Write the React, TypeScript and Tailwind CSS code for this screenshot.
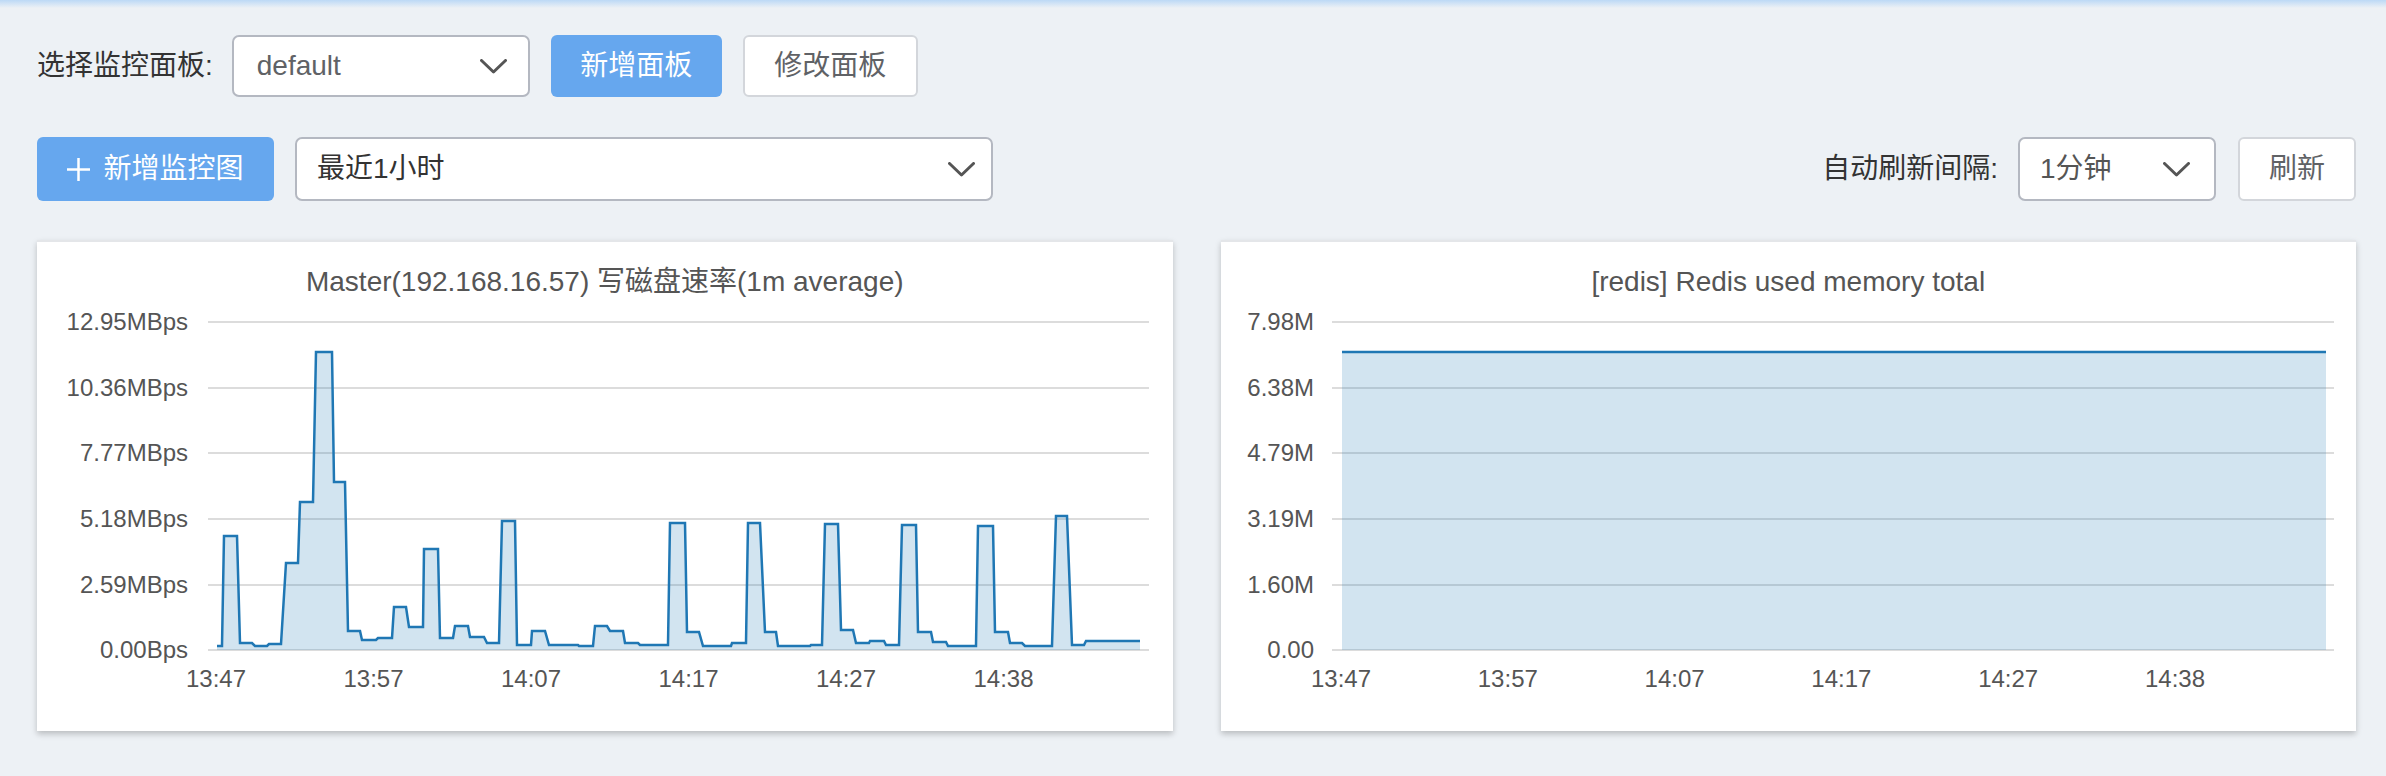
import React from 'react'

const font = "font-['Liberation_Sans','Noto_Sans_CJK_SC',sans-serif]"

function Chevron() {
  return (
    <svg width="27" height="15" viewBox="0 0 27 15" fill="none">
      <polyline points="1.5,1.5 13.5,13 25.5,1.5" stroke="#555" strokeWidth="3" strokeLinecap="round" strokeLinejoin="round" />
    </svg>
  )
}

function Plus() {
  return (
    <svg width="23" height="23" viewBox="0 0 23 23">
      <line x1="11.5" y1="0" x2="11.5" y2="23" stroke="#fff" strokeWidth="2.5" />
      <line x1="0" y1="11.5" x2="23" y2="11.5" stroke="#fff" strokeWidth="2.5" />
    </svg>
  )
}

const gridY = [22, 88, 153, 219, 285, 350]

// disk write rate, traced sample by sample
const diskPts: [number, number][] = [
  [180, 346], [185, 346], [187, 236], [200, 236], [203, 343], [215, 343], [218, 346], [230, 346], [232, 344], [244, 344],
  [249, 263], [261, 263], [263, 202], [276, 202], [279, 52], [295, 52], [297, 182], [308, 182], [311, 331], [323, 331],
  [325, 340], [339, 340], [341, 338], [355, 338], [357, 307], [369, 307], [372, 327], [386, 327], [387, 249], [401, 249],
  [403, 338], [416, 338], [418, 326], [431, 326], [433, 337], [447, 337], [450, 343], [462, 343], [465, 221], [478, 221],
  [480, 345], [494, 345], [495, 331], [508, 331], [512, 345], [541, 345], [542, 346], [556, 346], [558, 326], [570, 326],
  [573, 331], [586, 331], [588, 343], [601, 343], [603, 345], [631, 345], [633, 223], [648, 223], [650, 332], [662, 332],
  [666, 346], [694, 346], [695, 343], [709, 343], [711, 223], [723, 223], [728, 332], [739, 332], [741, 346], [773, 346],
  [774, 345], [785, 345], [788, 224], [801, 224], [804, 330], [816, 330], [819, 343], [832, 343], [833, 341], [847, 341],
  [849, 345], [862, 345], [865, 225], [879, 225], [881, 332], [894, 332], [896, 342], [909, 342], [911, 346], [939, 346],
  [941, 226], [956, 226], [958, 332], [971, 332], [973, 343], [985, 343], [988, 346], [1015, 346], [1019, 216], [1030, 216],
  [1035, 345], [1047, 345], [1049, 341], [1103, 341],
]

const times = ['13:47', '13:57', '14:07', '14:17', '14:27', '14:38']

function DiskChart() {
  const line = diskPts.map((p, i) => `${i ? 'L' : 'M'}${p[0]},${p[1]}`).join(' ')
  const area = `${line} L1103,350 L180,350 Z`
  const labels = ['12.95MBps', '10.36MBps', '7.77MBps', '5.18MBps', '2.59MBps', '0.00Bps']
  return (
    <svg width="1135" height="431" viewBox="0 0 1135 431" className="block">
      {gridY.map((y) => (
        <line key={y} x1="171" x2="1112" y1={y} y2={y} stroke="#dcdcdc" strokeWidth="2" />
      ))}
      {labels.map((t, i) => (
        <text key={t} x="151" y={gridY[i]} dy="0.35em" textAnchor="end" fontSize="24" fill="#555">{t}</text>
      ))}
      <path d={area} fill="#1f77b4" fillOpacity="0.2" />
      <path d={line} fill="none" stroke="#1f77b4" strokeWidth="2.5" strokeLinejoin="miter" />
      {times.map((t, i) => (
        <text key={t} x={179 + 157.5 * i} y="379" dy="0.35em" textAnchor="middle" fontSize="24" fill="#555">{t}</text>
      ))}
    </svg>
  )
}

function RedisChart() {
  const labels = ['7.98M', '6.38M', '4.79M', '3.19M', '1.60M', '0.00']
  return (
    <svg width="1135" height="431" viewBox="0 0 1135 431" className="block">
      {gridY.map((y) => (
        <line key={y} x1="111" x2="1113" y1={y} y2={y} stroke="#dcdcdc" strokeWidth="2" />
      ))}
      {labels.map((t, i) => (
        <text key={t} x="93" y={gridY[i]} dy="0.35em" textAnchor="end" fontSize="24" fill="#555">{t}</text>
      ))}
      <rect x="121" y="52" width="984" height="298" fill="#1f77b4" fillOpacity="0.2" />
      <line x1="121" x2="1105" y1="52" y2="52" stroke="#1f77b4" strokeWidth="2.5" />
      {times.map((t, i) => (
        <text key={t} x={120 + 166.8 * i} y="379" dy="0.35em" textAnchor="middle" fontSize="24" fill="#555">{t}</text>
      ))}
    </svg>
  )
}

function Panel({ title, children }: { title: string; children: React.ReactNode }) {
  return (
    <div className="bg-white h-[491px] border-t-2 border-[#e4e6e9] shadow-[0_3px_6px_rgba(0,0,0,0.22)] overflow-hidden">
      <div className="h-[58px] pt-[24px] text-center text-[28px] leading-[32px] text-[#555]">{title}</div>
      {children}
    </div>
  )
}

export default function App() {
  return (
    <div className={`min-h-screen w-full bg-[#edf1f5] ${font}`}>
      <div className="h-[8px] bg-gradient-to-b from-[#bcd9f6] to-[#edf1f5]" />
      <div className="pl-[37px] pr-[30px] pt-[27px]">
        <div className="flex items-center h-[62px]">
          <span className="text-[28px] text-[#333] mr-[19px]">选择监控面板:</span>
          <div className="w-[298px] h-[62px] bg-white border-2 border-[#b4b8c1] rounded-[7px] flex items-center justify-between pl-[23px] pr-[21px]">
            <span className="text-[28px] text-[#606266]">default</span>
            <Chevron />
          </div>
          <button className="ml-[21px] w-[171px] h-[62px] rounded-[6px] bg-[#66a7ee] text-white text-[28px]">新增面板</button>
          <button className="ml-[21px] w-[175px] h-[62px] rounded-[6px] bg-white border-2 border-[#d3d6db] text-[#606266] text-[28px]">修改面板</button>
        </div>

        <div className="flex items-center justify-between h-[64px] mt-[40px]">
          <div className="flex items-center">
            <button className="w-[237px] h-[64px] rounded-[6px] bg-[#66a7ee] text-white text-[28px] flex items-center justify-center gap-[13px]">
              <Plus />
              <span>新增监控图</span>
            </button>
            <div className="ml-[21px] w-[698px] h-[64px] bg-white border-2 border-[#b4b8c1] rounded-[7px] flex items-center justify-between pl-[20px] pr-[16px]">
              <span className="text-[28px] text-[#333]">最近1小时</span>
              <Chevron />
            </div>
          </div>
          <div className="flex items-center">
            <span className="text-[28px] text-[#333] mr-[20px]">自动刷新间隔:</span>
            <div className="w-[198px] h-[64px] bg-white border-2 border-[#b4b8c1] rounded-[7px] flex items-center justify-between pl-[20px] pr-[24px]">
              <span className="text-[28px] text-[#555]">1分钟</span>
              <Chevron />
            </div>
            <button className="ml-[22px] w-[118px] h-[64px] rounded-[6px] bg-white border-2 border-[#d3d6db] text-[#606266] text-[28px]">刷新</button>
          </div>
        </div>

        <div className="grid grid-cols-2 gap-[48px] mt-[39px]">
          <Panel title="Master(192.168.16.57) 写磁盘速率(1m average)">
            <DiskChart />
          </Panel>
          <Panel title="[redis] Redis used memory total">
            <RedisChart />
          </Panel>
        </div>
      </div>
    </div>
  )
}
